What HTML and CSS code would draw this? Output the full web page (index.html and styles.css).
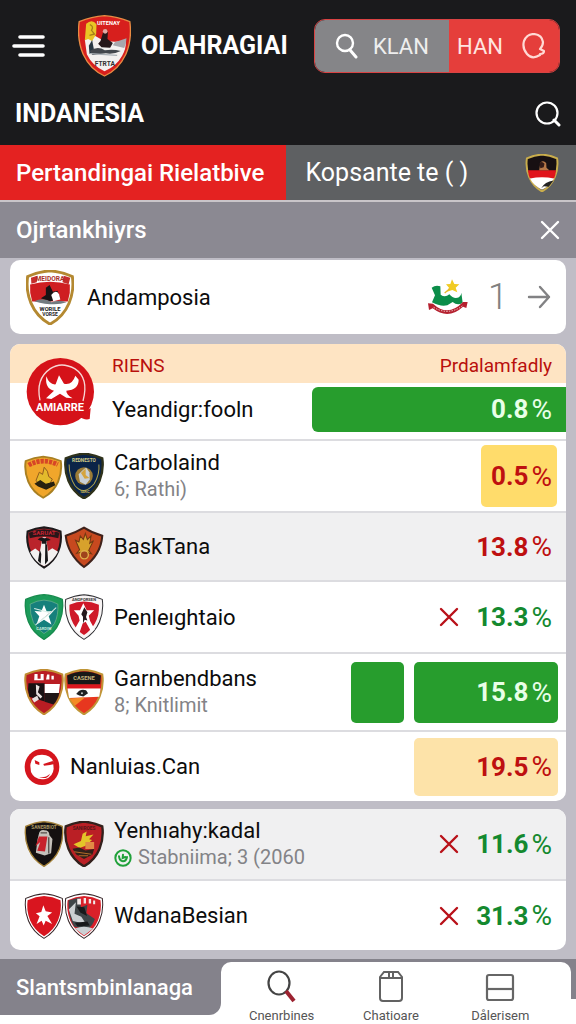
FILE: index.html
```html
<!DOCTYPE html>
<html lang="id">
<head>
    <meta charset="UTF-8">
    <meta name="viewport" content="width=device-width, initial-scale=1">
    <title>Olahragiai</title>
    <link rel="stylesheet" href="styles.css">
</head>
<body>
    <svg class="defs" aria-hidden="true">
        <defs>
            <path id="shield" d="M58 2Q86 4 112 16Q117 50 104 82Q90 116 58 134Q26 116 12 82Q-1 50 4 16Q30 4 58 2Z"/>
            <path id="star" d="M0-30L8-10L28-12L14 4L22 28L0 14L-22 28L-14 4L-28-12L-8-10Z"/>
        </defs>
    </svg>

    <header class="header">
        <div class="topbar">
            <button class="icon-btn menu" aria-label="Menu">
                <svg width="34" height="24" viewBox="0 0 34 24" fill="none" stroke="#fff" stroke-width="3.6" stroke-linecap="round"><path d="M8 3H31M2 12H31M8 21H31"/></svg>
            </button>
            <svg class="logo" viewBox="0 0 158 186">
                <path d="M79 2Q118 5 155 20Q162 74 143 118Q122 164 79 183Q36 164 15 118Q-4 74 3 20Q40 5 79 2Z" fill="#d71f1d" stroke="#e98b43" stroke-width="4"/>
                <path d="M20 74L50 62L78 78L110 80L143 78Q144 102 132 122Q115 153 79 169Q42 152 26 118Z" fill="#f3f1f0"/>
                <path d="M110 82L145 70Q144 88 138 99L104 91Z" fill="#a7a7ad"/>
                <path d="M24 26Q42 10 55 28L54 58L42 78L30 72L20 76Z" fill="#e9c525"/>
                <path d="M35 29Q48 34 40 46L49 57L34 61" fill="none" stroke="#a5801a" stroke-width="4"/>
                <path d="M42 75L48 108L34 117L32 92Z" fill="#283844"/>
                <path d="M67 78L76 48Q86 37 89 55L88 72L104 84L96 98L70 97L60 86Z" fill="#25171a"/>
                <circle cx="81" cy="49" r="7" fill="#e2aaa5"/>
                <path d="M35 108Q58 91 80 106Q103 101 128 108Q103 120 83 115L43 120Z" fill="#42474d"/>
                <path d="M37 116L117 121" stroke="#a8afb5" stroke-width="4"/>
                <text x="91" y="31" class="crest-text" font-size="17" fill="#fff">UITENAY</text>
                <text x="80" y="153" class="crest-text" font-size="20" fill="#333">FTRTA</text>
            </svg>
            <h1 class="brand">OLAHRAGIAI</h1>
            <form class="search">
                <label class="search-field">
                    <svg width="24" height="26" viewBox="0 0 24 26" fill="none" stroke="#fff" stroke-width="2.4" stroke-linecap="round"><circle cx="10" cy="10" r="8"/><path d="M15 17L21 24" stroke-width="3"/></svg>
                    <input type="text" value="KLAN" aria-label="Cari">
                </label>
                <button class="search-btn" type="button">HAN
                    <svg width="24" height="26" viewBox="0 0 24 26" fill="none" stroke="#ffd9d4" stroke-width="2.2" stroke-linecap="round" stroke-linejoin="round"><path d="M18 22Q10 27 5 21Q0 15 2 8Q5 1 12 1Q20 2 21 9Q21 13 18 16L22 18Q22 21 18 21"/></svg>
                </button>
            </form>
        </div>
        <div class="subbar">
            <h2 class="brand">INDANESIA</h2>
            <button class="icon-btn" aria-label="Cari">
                <svg width="26" height="26" viewBox="0 0 26 26" fill="none" stroke="#fff" stroke-width="2.2" stroke-linecap="round"><circle cx="12" cy="12" r="10.5"/><path d="M19 19L24 24" stroke-width="3"/></svg>
            </button>
        </div>
    </header>

    <nav class="tabs">
        <button class="tab active">Pertandingai Rielatbive</button>
        <button class="tab">Kopsante te ( )
            <svg width="34" height="38" viewBox="0 0 116 136">
                <use href="#shield" fill="#171012" stroke="#c9ad4c" stroke-width="7"/>
                <path d="M8 58H108Q107 76 101 88H15Q9 74 8 58Z" fill="#e0141b"/>
                <path d="M15 88Q58 79 101 88Q88 114 58 128Q28 114 15 88Z" fill="#fff"/>
                <path d="M48 58L52 31Q62 20 73 32L74 49L84 58Z" fill="#b67848"/>
                <path d="M49 34Q57 23 67 35L64 47L52 51Z" fill="#351c18"/>
                <path d="M55 123Q68 99 99 95L82 117L65 115Z" fill="#222"/>
            </svg>
        </button>
    </nav>

    <div class="section-head">
        <h3>Ojrtankhiyrs</h3>
        <button class="icon-btn" aria-label="Tutup">
            <svg width="20" height="20" viewBox="0 0 20 20" stroke="#fff" stroke-width="2.4" stroke-linecap="round"><path d="M2 2L18 18M18 2L2 18"/></svg>
        </button>
    </div>

    <main class="content">
        <a class="card feature" href="#">
            <svg width="48" height="55" viewBox="0 0 116 136" preserveAspectRatio="none">
                <use href="#shield" fill="#fff" stroke="#b48931" stroke-width="7"/>
                <path d="M10 36Q58 22 106 36Q108 57 101 78H15Q8 57 10 36Z" fill="#cf1e22"/>
                <path d="M12 19L28 14L26 30L13 34ZM91 14L107 19L103 35L88 30Z" fill="#c62d2c"/>
                <text x="58" y="26" class="crest-text" font-size="16" fill="#a92f2a">MEIDORA</text>
                <path d="M48 44L57 37L65 54L76 51L83 70L58 78L36 70L48 62Z" fill="#191315"/>
                <path d="M61 62Q72 47 80 60L83 73L66 77Z" fill="#fff"/>
                <path d="M20 77Q43 66 62 80Q80 72 98 80Q68 91 20 77Z" fill="#727b80"/>
                <text x="58" y="101" class="crest-text" font-size="14" fill="#222">WORILE</text>
                <text x="58" y="114" class="crest-text" font-size="12" fill="#222">VORSE</text>
            </svg>
            <span class="name">Andamposia</span>
            <svg width="42" height="38" viewBox="0 0 126 114">
                <path d="M14 29Q26 20 40 25L41 50Q54 60 67 49Q80 65 96 58Q103 53 103 44L107 74Q92 84 77 72L61 82Q41 87 15 73L24 52Z" fill="#0b8d49"/>
                <path d="M75 4L82 18L97 19L86 29L91 43L76 36L60 41L66 29L57 19L70 18Z" fill="#f1cb23"/>
                <path d="M53 45L68 32" stroke="#e6b82b" stroke-width="4"/>
                <path d="M3 76L18 77Q63 119 108 72L122 72L118 90L108 86Q64 127 17 91L6 96Z" fill="#b5202f"/>
                <path d="M20 88Q63 114 106 84" fill="none" stroke="#f3d4d4" stroke-width="3" stroke-dasharray="4 4"/>
            </svg>
            <span class="rank">1</span>
            <svg width="26" height="26" viewBox="0 0 26 26" fill="none" stroke="#828284" stroke-width="2.4" stroke-linecap="round" stroke-linejoin="round"><path d="M3 13H23M14 3L23 13L14 23"/></svg>
        </a>

        <section class="card">
            <div class="card-head">
                <svg class="badge" width="70" height="70" viewBox="0 0 210 210">
                    <circle cx="103" cy="104" r="101" fill="#d51219"/>
                    <path d="M156 177Q176 191 191 186L194 153Z" fill="#d51219"/>
                    <path d="M42 130Q28 66 73 35Q106 13 146 35Q190 63 171 132" fill="none" stroke="#f7d6d5" stroke-width="4"/>
                    <path d="M99 55L114 80Q138 86 148 56L158 68Q158 98 121 101Q120 112 140 124L121 122L102 110L76 126L60 124L84 101Q56 95 61 58Q70 84 89 82Z" fill="#fff"/>
                    <text x="102" y="161" class="crest-text" font-size="33" fill="#fff">AMIARRE</text>
                </svg>
                <span>RIENS</span>
                <span>Prdalamfadly</span>
            </div>
            <div class="row row-first">
                <span class="name">Yeandigr:fooln</span>
                <span class="value bar wide">0.8<i>%</i></span>
            </div>
            <div class="row">
                <div class="crests">
                    <svg viewBox="0 0 116 136">
                        <g transform="translate(0 9) scale(.96 .92)"><use href="#shield" fill="#f0a62b" stroke="#a98022" stroke-width="6"/>
                        <path d="M13 29Q55 5 103 27" fill="none" stroke="#d74626" stroke-width="15" stroke-dasharray="10 3"/>
                        <path d="M36 78L46 52L56 59L61 36L71 49L75 66L86 74L76 94H46Z" fill="#e3ba2c" stroke="#8d571c" stroke-width="3"/>
                        <path d="M31 89L49 77L66 89L91 82L95 94L67 108L42 98Z" fill="#28210f"/></g>
                    </svg>
                    <svg viewBox="0 0 116 136">
                        <use href="#shield" fill="#0b2448" stroke="#2f321b" stroke-width="7"/>
                        <path d="M14 34Q14 69 31 96Q57 128 88 91Q105 63 102 34" fill="none" stroke="#b0a34c" stroke-width="3"/>
                        <text x="58" y="26" class="crest-text" font-size="14" fill="#d7cf8a">REDNESTO</text>
                        <circle cx="58" cy="68" r="26" fill="#9b7b36"/>
                        <path d="M46 85L42 63L55 50L64 43L74 57L75 78L63 94Z" fill="#c9d0d5"/>
                        <path d="M49 59L63 45L63 65L74 74L60 76Z" fill="#d5a43e"/>
                        <text x="61" y="119" class="crest-text" font-size="12" fill="#c4b45b">IARC</text>
                    </svg>
                </div>
                <div class="label"><span class="name">Carbolaind</span><small>6; Rathi)</small></div>
                <span class="value red box yellow">0.5<i>%</i></span>
            </div>
            <div class="row row-mid shaded">
                <div class="crests">
                    <svg viewBox="0 0 116 136">
                        <g transform="translate(6 8) scale(.9)"><use href="#shield" fill="#ba242b" stroke="#1c191b" stroke-width="7"/>
                        <path d="M8 20Q58-3 108 20L105 38Q58 25 11 38Z" fill="#281619"/>
                        <text x="58" y="27" class="crest-text" font-size="20" fill="#c32331">SARUAT</text>
                        <path d="M12 83L29 72L44 83L53 35H64L71 80L85 71L104 82Q87 115 58 130Q30 118 12 83Z" fill="#f3f1f0"/>
                        <path d="M37 42Q48 32 58 38Q70 34 80 44L66 47V56H51V48Z" fill="#171719"/>
                        <path d="M44 76L49 90L47 122L38 112ZM62 52L68 60L71 112L61 124Z" fill="#171719"/></g>
                    </svg>
                    <svg viewBox="0 0 116 136">
                        <path d="M58 11Q81 26 112 35Q108 91 58 127Q10 90 4 35Q35 25 58 11Z" fill="#c7491f" stroke="#40221b" stroke-width="6"/>
                        <path d="M33 48L43 53L47 35L56 46L62 28L68 46L79 35L75 57L86 49L72 78L80 88L62 83L59 101L51 83L36 87L45 76Z" fill="#d7a12c" stroke="#713812" stroke-width="3"/>
                        <circle cx="59" cy="91" r="12" fill="#9f431c" stroke="#dfb04a" stroke-width="4"/>
                    </svg>
                </div>
                <span class="name">BaskTana</span>
                <span class="value red">13.8<i>%</i></span>
            </div>
            <div class="row">
                <div class="crests">
                    <svg viewBox="0 0 116 136">
                        <use href="#shield" fill="#1c9b5a" stroke="#178b4d" stroke-width="4"/>
                        <path d="M58 18Q80 19 99 30Q101 63 89 87Q77 107 58 117Q39 105 27 85Q16 60 17 30Q37 19 58 18Z" fill="#16807c" stroke="#75b593" stroke-width="2"/>
                        <use href="#star" x="58" y="62" fill="#fff"/>
                        <path d="M29 43L74 55M33 91L78 55L94 40" stroke="#d8eee6" stroke-width="3"/>
                        <text x="58" y="107" class="crest-text" font-size="12" fill="#c5eadb">CARDIW</text>
                    </svg>
                    <svg viewBox="0 0 116 136">
                        <use href="#shield" fill="#f8f4f4" stroke="#303034" stroke-width="3"/>
                        <path d="M15 32Q58 12 102 32Q104 65 90 87Q77 109 58 121Q39 110 26 87Q13 65 15 32Z" fill="#cf1828"/>
                        <text x="58" y="20" class="crest-text" font-size="12" fill="#333">ANOPORSEN</text>
                        <path d="M56 27L66 48L88 48L72 64L76 80L90 105L80 113L63 82L54 87L45 113L31 103L45 78L42 64L28 48H46Z" fill="#fff"/>
                        <path d="M59 39L68 54L64 68L68 78L60 76L55 87L55 67L50 60Z" fill="#24191c"/>
                    </svg>
                </div>
                <span class="name">Penleıghtaio</span>
                <svg class="cross" viewBox="0 0 20 20"><path d="M2 2L18 18M18 2L2 18"/></svg>
                <span class="value green">13.3<i>%</i></span>
            </div>
            <div class="row row-tall">
                <div class="crests">
                    <svg viewBox="0 0 116 136">
                        <use href="#shield" fill="#b91d23" stroke="#c08c32" stroke-width="6"/>
                        <path d="M12 42H60V96L15 82Q8 62 12 42Z" fill="#191113"/>
                        <path d="M60 44H105L102 71H60Z" fill="#fff"/>
                        <path d="M60 71H103Q99 91 86 105L60 97Z" fill="#201516"/>
                        <path d="M30 15H39V29H48V15H57V33H29ZM67 16H74V31H64ZM80 20H87V31H80Z" fill="#fff"/>
                        <path d="M22 88L38 79L43 90L29 99ZM34 46L45 52L40 69L53 81L48 87L35 75Z" fill="#e8e0df"/>
                    </svg>
                    <svg viewBox="0 0 116 136">
                        <use href="#shield" fill="#e7371f" stroke="#bf9637" stroke-width="6"/>
                        <path d="M8 19Q58-4 108 19L106 46H10Z" fill="#181817"/>
                        <path d="M9 46H107V58H9Z" fill="#dc171f"/>
                        <path d="M9 58H107L103 82L14 86Z" fill="#fff"/>
                        <path d="M15 87L61 84L31 109Z" fill="#f38b26"/>
                        <text x="58" y="33" class="crest-text" font-size="17" fill="#c3b37c">CASENE</text>
                        <path d="M35 74Q46 57 64 63L70 72L56 81L44 78Z" fill="#202022"/><circle cx="52" cy="72" r="3" fill="#c9c9c9"/>
                    </svg>
                </div>
                <div class="label"><span class="name">Garnbendbans</span><small>8; Knitlimit</small></div>
                <span class="bar block"></span>
                <span class="value bar medium">15.8<i>%</i></span>
            </div>
            <div class="row row-mid">
                <svg width="36" height="38" viewBox="0 0 108 114">
                    <ellipse cx="54" cy="57" rx="52" ry="54" fill="#d5151d"/>
                    <path d="M19 53Q21 20 54 20Q80 20 87 40L89 62Q87 86 64 93Q32 98 21 72Z" fill="#fff"/>
                    <path d="M32 36L46 43V51L34 47ZM58 48L86 39L91 48L78 51L60 53ZM41 86Q63 92 78 77Q70 98 41 86Z" fill="#d5151d"/>
                </svg>
                <span class="name">Nanluias.Can</span>
                <span class="value red box medium peach">19.5<i>%</i></span>
            </div>
        </section>

        <section class="card">
            <div class="row shaded">
                <div class="crests">
                    <svg viewBox="0 0 116 136">
                        <use href="#shield" fill="#141011" stroke="#a38139" stroke-width="4"/>
                        <text x="58" y="24" class="crest-text" font-size="14" fill="#a89863">SANERBIOT</text>
                        <path d="M43 38Q45 25 59 27Q74 27 74 42L83 53L79 95L60 102L34 94L39 54Z" fill="#c4c0bb"/>
                        <path d="M43 46H68L61 90L38 88L47 62L33 75Z" fill="#c7212c"/>
                        <path d="M72 48V96M48 35H67" stroke="#554e4b" stroke-width="4"/>
                    </svg>
                    <svg viewBox="0 0 116 136">
                        <use href="#shield" fill="#ba1f25" stroke="#33201c" stroke-width="7"/>
                        <text x="58" y="26" class="crest-text" font-size="14" fill="#541719">SANIROES</text>
                        <path d="M27 69L49 59L54 38L66 31L63 45L86 40L73 54L82 56L61 74L45 80Z" fill="#e4c429"/>
                        <path d="M62 62H88V83H62Z" fill="#e28b45"/>
                        <path d="M24 82L45 78L62 87L88 83L83 99L58 112L35 99Z" fill="#30201a"/>
                        <path d="M29 91L80 98M42 103H70" stroke="#af6a27" stroke-width="3"/>
                    </svg>
                </div>
                <div class="label">
                    <span class="name">Yenhıahy:kadal</span>
                    <small>
                        <svg width="18" height="18" viewBox="0 0 54 54" fill="none" stroke="#20a13a" stroke-width="6" stroke-linecap="round"><circle cx="27" cy="27" r="23"/><path d="M15 22Q17 36 27 37Q37 36 39 24M27 17L26 27L34 24"/></svg>
                        Stabniima; 3 (2060
                    </small>
                </div>
                <svg class="cross" viewBox="0 0 20 20"><path d="M2 2L18 18M18 2L2 18"/></svg>
                <span class="value green">11.6<i>%</i></span>
            </div>
            <div class="row row-mid">
                <div class="crests">
                    <svg viewBox="0 0 116 136">
                        <use href="#shield" fill="#fff" stroke="#342326" stroke-width="3"/>
                        <use href="#shield" transform="translate(6 7) scale(.9)" fill="#d9151f"/>
                        <path d="M56 36L63 54L82 58L68 68L82 92L63 82L57 96L51 82L36 92L45 69L34 60L50 56Z" fill="#fff"/>
                    </svg>
                    <svg viewBox="0 0 116 136">
                        <use href="#shield" fill="#fff" stroke="#342326" stroke-width="3"/>
                        <use href="#shield" transform="translate(6 7) scale(.9)" fill="#d9202a"/>
                        <path d="M12 22L45 13L49 42L68 35L65 60L90 77Q84 98 67 108L29 100Q12 74 12 22Z" fill="#3e4548"/>
                        <path d="M13 49L34 27L30 61L50 70L64 92L25 83ZM31 105Q58 95 85 105L58 126Z" fill="#cbd0d3"/>
                        <path d="M38 17H49V34H38ZM57 15H64V31H57ZM72 18H79V31H72ZM85 22H91V33H85Z" fill="#f1e9e9"/>
                        <path d="M36 40L59 42L67 68L47 58ZM31 88L68 84L75 96L39 99Z" fill="#17191b"/>
                    </svg>
                </div>
                <span class="name">WdanaBesian</span>
                <svg class="cross" viewBox="0 0 20 20"><path d="M2 2L18 18M18 2L2 18"/></svg>
                <span class="value green">31.3<i>%</i></span>
            </div>
        </section>
    </main>

    <footer class="footer">
        <h3>Slantsmbinlanaga</h3>
        <nav class="bottom-nav">
            <a href="#">
                <svg width="32" height="34" viewBox="0 0 32 34" fill="none" stroke="#444" stroke-width="2.2"><ellipse cx="13" cy="13" rx="10.5" ry="11.5"/><path d="M20 21L28 31" stroke="#9c2230" stroke-width="4"/></svg>
                Cnenrbines
            </a>
            <a href="#">
                <svg width="32" height="34" viewBox="0 0 32 34" fill="none" stroke="#626262" stroke-width="2"><path d="M9 2H23L27 7V28Q27 31 24 31H8Q5 31 5 28V7ZM5 8H27M14 2V7M18 2V7"/></svg>
                Chatioare
            </a>
            <a href="#">
                <svg width="32" height="34" viewBox="0 0 32 34" fill="none" stroke="#666" stroke-width="2.2"><rect x="3" y="5" width="26" height="25" rx="2"/><path d="M3 19H29"/></svg>
                Dålerisem
            </a>
        </nav>
    </footer>
</body>
</html>
```

FILE: styles.css
```css
*{
    box-sizing: border-box;
    margin: 0;
    padding: 0;
}
body{
    min-height: 100vh;
    display: flex;
    flex-direction: column;
    font-family: Roboto, "Liberation Sans", sans-serif;
    font-size: 22px;
    color: #0c0c0c;
    background: #bfbdc6;
}
button, input{
    font: inherit;
    color: inherit;
    background: none;
    border: 0;
}
a{
    color: inherit;
    text-decoration: none;
}
svg{
    flex: none;
}
.defs{
    position: absolute;
    width: 0;
    height: 0;
}
.crest-text{
    font-family: Roboto, sans-serif;
    font-weight: bold;
    text-anchor: middle;
}

/* header */
.header{
    color: #fff;
    background: #1a1a1c;
    height: 145px;
}
.topbar{
    display: flex;
    align-items: center;
    height: 92px;
    padding: 0 16px 0 12px;
}
.icon-btn{
    display: flex;
    flex: none;
}
.menu{
    margin-right: 32px;
}
.logo{
    width: 53px;
    height: 62px;
    margin-right: 10px;
}
.brand{
    font-size: 25px;
    line-height: 32px;
    font-weight: bold;
}
.search{
    display: flex;
    width: 246px;
    height: 54px;
    margin-left: auto;
    border: 1px solid #d94343;
    border-radius: 11px;
    overflow: hidden;
}
.search-field{
    display: flex;
    align-items: center;
    gap: 14px;
    width: 134px;
    padding-left: 20px;
    background: #858588;
}
.search-field input{
    width: 100%;
    min-width: 0;
    color: #eee;
}
.search-btn{
    flex: 1;
    display: flex;
    align-items: center;
    justify-content: space-between;
    padding: 0 13px 0 8px;
    color: #ffe5e0;
    background: #e53e3b;
}
.subbar{
    display: flex;
    align-items: center;
    justify-content: space-between;
    padding: 6px 15px 0;
}

/* tabs */
.tabs{
    display: flex;
    height: 57px;
    color: #fff;
    border-bottom: 2px solid #c9c5c9;
}
.tab{
    flex: 1;
    display: flex;
    align-items: center;
    justify-content: space-between;
    padding: 0 17px 0 20px;
    font-size: 25px;
    white-space: nowrap;
    background: #5e6062;
}
.tab.active{
    padding: 0 16px;
    font-size: 24px;
    font-weight: 500;
    background: #e42221;
}
.section-head{
    display: flex;
    align-items: center;
    justify-content: space-between;
    height: 56px;
    padding: 0 16px;
    color: #fff;
    background: #8b8992;
}
.section-head h3{
    font-size: 24px;
    font-weight: 500;
}

/* cards */
.content{
    flex: 1;
    display: flex;
    flex-direction: column;
    gap: 8px;
    padding: 2px 10px 8px;
}
.card{
    position: relative;
    border-radius: 10px;
    background: #fff;
    overflow: hidden;
}
.feature{
    display: flex;
    align-items: center;
    height: 74px;
    padding: 0 14px 0 16px;
    margin-bottom: 2px;
}
.feature .name{
    margin-left: 13px;
}
.rank{
    margin: 0 18px 0 19px;
    font-size: 36px;
    font-weight: 300;
    color: #808080;
}
.card-head{
    display: flex;
    align-items: center;
    justify-content: space-between;
    height: 39px;
    padding: 4px 14px 0 102px;
    font-size: 19px;
    color: #b9100c;
    background: #fee4c3;
}
.badge{
    position: absolute;
    left: 16px;
    top: 13px;
}
.row{
    display: flex;
    align-items: center;
    gap: 10px;
    height: 72px;
    padding: 0 14px;
    border-bottom: 2px solid #dcdce0;
}
.row:last-child{
    border-bottom: 0;
}
.row-first{
    height: 58px;
    padding: 0 0 4px 102px;
}
.row-tall{
    height: 78px;
}
.row-mid{
    height: 69px;
}
.shaded{
    background: #f0f0f1;
}
.crests{
    display: flex;
    flex: none;
}
.crests svg{
    width: 40px;
    height: 46px;
}
.name{
    flex: 1;
    white-space: nowrap;
}
.label{
    flex: 1;
    display: flex;
    flex-direction: column;
    line-height: 27px;
    white-space: nowrap;
}
.label small{
    display: flex;
    align-items: center;
    gap: 6px;
    font-size: 20px;
    color: #838387;
}
.value{
    flex: none;
    display: flex;
    align-items: center;
    justify-content: flex-end;
    gap: 3px;
    font-size: 26px;
    font-weight: bold;
}
.value i{
    font-size: 28px;
    font-style: normal;
    font-weight: normal;
}
.red{
    color: #be1010;
}
.green{
    color: #14892f;
}
.bar{
    height: 61px;
    border-radius: 5px;
    color: #e8ffe8;
    background: #279d2d;
}
.wide{
    width: 56%;
    height: 45px;
    padding-right: 14px;
    border-radius: 6px 0 0 6px;
}
.block{
    width: 53px;
}
.box{
    height: 62px;
    padding: 0 5px 0 10px;
    margin-right: -5px;
    border-radius: 5px;
}
.medium{
    width: 144px;
    padding-right: 6px;
    margin-right: -6px;
}
.yellow{
    background: #ffdc6b;
}
.peach{
    height: 58px;
    background: #fde3a9;
}
.cross{
    width: 20px;
    height: 20px;
    margin-right: 7px;
    stroke: #b91119;
    stroke-width: 2.4;
    stroke-linecap: round;
}

/* footer */
.footer{
    display: flex;
    align-items: flex-start;
    height: 65px;
    padding-right: 5px;
    background: linear-gradient(#84828b 40px, #fff 40px);
}
.footer h3{
    width: 221px;
    height: 56px;
    padding: 0 16px;
    font-size: 22px;
    line-height: 58px;
    font-weight: 500;
    color: #fff;
    background: #84828b;
    border-radius: 0 0 12px 0;
}
.bottom-nav{
    flex: 1;
    display: flex;
    justify-content: space-around;
    height: 62px;
    margin-top: 3px;
    padding: 8px 16px 0 6px;
    border-radius: 10px 10px 0 0;
    background: #fff;
}
.bottom-nav a{
    display: flex;
    flex-direction: column;
    align-items: center;
    gap: 5px;
    width: 80px;
    font-size: 13px;
    line-height: 14px;
    color: #555;
}
```
